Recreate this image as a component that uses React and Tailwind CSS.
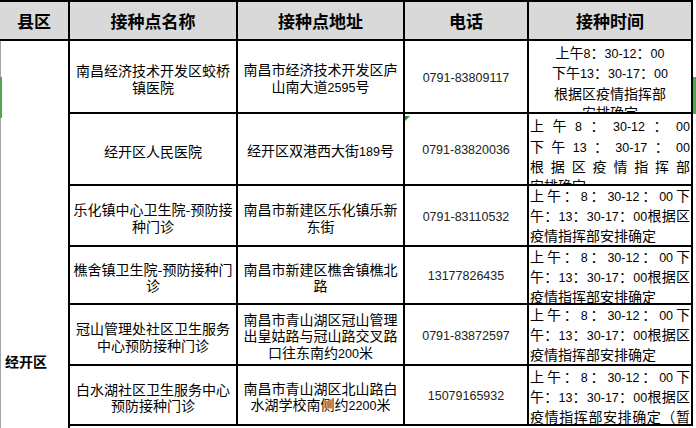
import React from "react";

// Excel 表格截图：经开区接种点
const Txt = ({ s }) =>
  s.split(/([0-9-]+)/).map((part, i) =>
    /[0-9]/.test(part) ? (
      <span key={i} className="font-['Liberation_Sans',sans-serif] text-[12.5px]">
        {part}
      </span>
    ) : (
      <React.Fragment key={i}>{part}</React.Fragment>
    )
  );

const Spread = ({ tokens }) => (
  <div className="flex justify-between whitespace-nowrap">
    {tokens.map((t, i) => (
      <span key={i}>
        <Txt s={t} />
      </span>
    ))}
  </div>
);

const chars = (s) => s.split("");

const spreadLines = [
  ["上", "午", "：", "8", "：", "30-12", "：", "00", "下"],
  ["午", "：", "13", "：", "30-17", "：", "00", "根", "据", "区"],
];

const TimeStd = () => (
  <div className="h-full overflow-hidden px-px leading-[18px]">
    {spreadLines.map((line, i) => (
      <Spread key={i} tokens={line} />
    ))}
    <div className="whitespace-nowrap">疫情指挥部安排确定</div>
  </div>
);

const TimeLast = () => (
  <div className="h-full px-px pt-[1px] leading-[18px]">
    {spreadLines.map((line, i) => (
      <Spread key={i} tokens={line} />
    ))}
    <Spread tokens={chars("疫情指挥部安排确定（暂")} />
    <div className="whitespace-nowrap">定）</div>
  </div>
);

const TimeCentered = () => (
  <div className="h-full overflow-hidden pt-[1.5px] text-center leading-[18.7px]">
    {["上午8：30-12：00", "下午13：30-17：00", "根据区疫情指挥部", "安排确定"].map((l) => (
      <div key={l} className="whitespace-nowrap">
        <Txt s={l} />
      </div>
    ))}
  </div>
);

const TimeJustified = () => (
  <div className="h-full overflow-hidden px-px pt-[2px] leading-[18.5px]">
    <Spread tokens={["上", "午", "8", "：", "30-12", "：", "00"]} />
    <Spread tokens={["下", "午", "13", "：", "30-17", "：", "00"]} />
    <Spread tokens={chars("根据区疫情指挥部")} />
    <div className="whitespace-nowrap">安排确定</div>
  </div>
);

const rows = [
  {
    h: "h-[73px]",
    name: ["南昌经济技术开发区蛟桥", "镇医院"],
    addr: ["南昌市经济技术开发区庐", "山南大道2595号"],
    phone: "0791-83809117",
    time: <TimeCentered />,
  },
  {
    h: "h-[72px]",
    name: ["经开区人民医院"],
    addr: ["经开区双港西大街189号"],
    phone: "0791-83820036",
    time: <TimeJustified />,
  },
  {
    h: "h-[61px]",
    name: ["乐化镇中心卫生院-预防接", "种门诊"],
    addr: ["南昌市新建区乐化镇乐新", "东街"],
    phone: "0791-83110532",
    time: <TimeStd />,
  },
  {
    h: "h-[58px]",
    name: ["樵舍镇卫生院-预防接种门", "诊"],
    addr: ["南昌市新建区樵舍镇樵北", "路"],
    phone: "13177826435",
    time: <TimeStd />,
  },
  {
    h: "h-[61px]",
    name: ["冠山管理处社区卫生服务", "中心预防接种门诊"],
    addr: ["南昌市青山湖区冠山管理", "出皇姑路与冠山路交叉路", "口往东南约200米"],
    phone: "0791-83872597",
    time: <TimeStd />,
  },
  {
    h: "h-[60px]",
    name: ["白水湖社区卫生服务中心", "预防接种门诊"],
    addr: ["南昌市青山湖区北山路白", "水湖学校南侧约2200米"],
    phone: "15079165932",
    time: <TimeLast />,
  },
];

const Lines = ({ lines }) => (
  <div className="text-center leading-[16.5px]">
    {lines.map((l) => (
      <div key={l} className="whitespace-nowrap">
        <Txt s={l} />
      </div>
    ))}
  </div>
);

const headers = [
  ["县区", "w-[70px]"],
  ["接种点名称", "w-[168px]"],
  ["接种点地址", "w-[167px]"],
  ["电话", "w-[124px]"],
  ["接种时间", "w-[164px]"],
];

export default function App() {
  return (
    <div className="relative h-[428px] w-[696px] overflow-hidden bg-white font-['Noto_Sans_CJK_SC',sans-serif] text-[14px] text-black">
      <div className="flex h-[41px] w-[693px] border-y-2 border-black bg-[#d9d9d9]">
        {headers.map(([t, w]) => (
          <div
            key={t}
            className={`${w} flex items-center justify-center border-r-2 border-black pt-[1px] text-[17px] font-bold`}
          >
            {t}
          </div>
        ))}
      </div>

      <div className="flex">
        <div className="flex h-[387px] w-[70px] items-end border-l border-r-2 border-l-[#a3a3a3] border-r-black pb-[58px] pl-[4px]">
          <span className="font-bold leading-[17px]">经开区</span>
        </div>

        <div className="flex w-[623px] flex-col">
          {rows.map((r) => (
            <div key={r.phone} className={`${r.h} flex border-b-2 border-black`}>
              <div className="flex h-full w-[168px] items-center justify-center border-r-2 border-black pt-[4px]">
                <Lines lines={r.name} />
              </div>
              <div className="flex h-full w-[167px] items-center justify-center border-r-2 border-black pt-[4px]">
                <Lines lines={r.addr} />
              </div>
              <div className="flex h-full w-[124px] items-center justify-center border-r-2 border-black pt-[3px]">
                <span className="font-['Liberation_Sans',sans-serif] text-[12.5px] text-[#222]">
                  {r.phone}
                </span>
              </div>
              <div className="h-full w-[164px] border-r-2 border-black">{r.time}</div>
            </div>
          ))}
        </div>
      </div>

      {/* Excel 选区残留的绿色标记 */}
      <div className="absolute left-0 top-[77px] h-[41px] w-[2px] bg-[#4fa84f]" />
      <div className="absolute left-[693px] top-[77px] h-[37px] w-[3px] bg-[#4fa84f]" />
      <div className="absolute left-[405px] top-[116px] h-0 w-0 border-r-[5px] border-t-[5px] border-r-transparent border-t-[#2f8f2f]" />
    </div>
  );
}
